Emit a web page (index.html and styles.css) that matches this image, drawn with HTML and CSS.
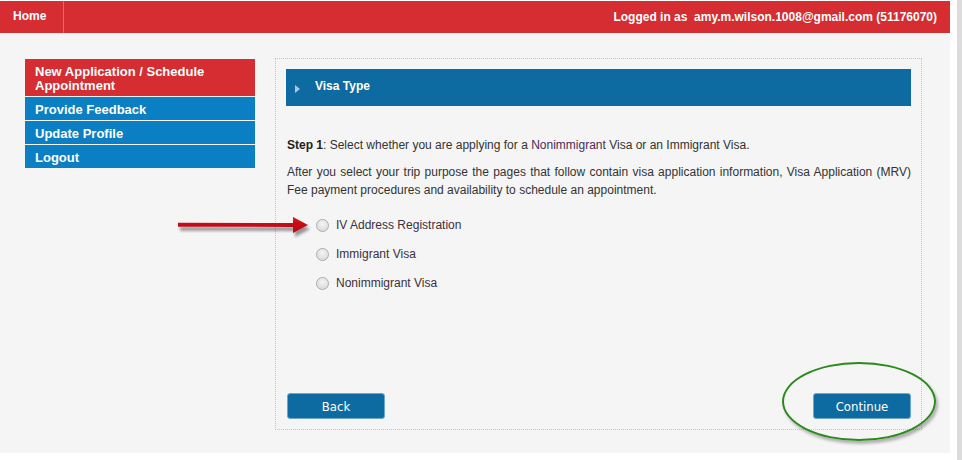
FILE: index.html
```
<!DOCTYPE html>
<html>
<head>
<meta charset="utf-8">
<link rel="stylesheet" href="styles.css">
</head>
<body>
<div class="frame">
  <div class="page">
    <div class="topbar">
      <div class="home">Home</div>
      <div class="login">Logged in as&nbsp; amy.m.wilson.1008@gmail.com (51176070)</div>
    </div>
    <div class="main">
      <ul class="sidebar">
        <li class="nav-item active">New Application / Schedule Appointment</li>
        <li class="nav-item">Provide Feedback</li>
        <li class="nav-item">Update Profile</li>
        <li class="nav-item">Logout</li>
      </ul>
      <div class="panel">
        <div class="panel-head"><span class="tri"></span><span class="head-text">Visa Type</span></div>
        <p class="step"><b>Step 1</b>: Select whether you are applying for a <span class="visited">Nonimmigrant</span> Visa or an Immigrant Visa.</p>
        <p class="info">After you select your trip purpose the pages that follow contain visa application information, Visa Application (MRV) Fee payment procedures and availability to schedule an appointment.</p>
        <div class="options">
          <label class="option"><span class="radio"></span><span class="lbl">IV Address Registration</span></label>
          <label class="option"><span class="radio"></span><span class="lbl">Immigrant Visa</span></label>
          <label class="option"><span class="radio"></span><span class="lbl">Nonimmigrant Visa</span></label>
        </div>
        <div class="actions">
          <button class="btn">Back</button>
          <button class="btn">Continue</button>
        </div>
      </div>
    </div>
    <svg class="arrow" width="150" height="30" viewBox="0 0 150 30">
      <defs>
        <filter id="sh" x="-10%" y="-50%" width="130%" height="250%">
          <feGaussianBlur in="SourceAlpha" stdDeviation="1.8"/>
          <feOffset dx="2" dy="4" result="b"/>
          <feComponentTransfer><feFuncA type="linear" slope="0.4"/></feComponentTransfer>
          <feMerge><feMergeNode/><feMergeNode in="SourceGraphic"/></feMerge>
        </filter>
        <linearGradient id="ag" x1="0" y1="0" x2="0" y2="1">
          <stop offset="0" stop-color="#d4141c"/>
          <stop offset="1" stop-color="#b00c12"/>
        </linearGradient>
      </defs>
      <g filter="url(#sh)">
        <path d="M1 8.7 L116 9 L116 3 L131 11 L116 19 L116 12.9 L1 12.7 Z" fill="url(#ag)"/>
      </g>
    </svg>
    <div class="ring"></div>
  </div>
  <div class="scroll"></div>
</div>
</body>
</html>
```
FILE: styles.css
```
html, body {
  margin: 0;
  padding: 0;
  background: #ffffff;
}
body {
  font-family: "Liberation Sans", Arial, sans-serif;
  font-size: 12px;
  color: #333333;
}
.frame {
  display: flex;
  gap: 7px;
  width: 962px;
  height: 460px;
  overflow: hidden;
}
.page {
  position: relative;
  width: 950px;
  flex: none;
}
.scroll {
  flex: 1;
  background: #dcdcdc;
}
.topbar {
  margin-top: 1px;
  height: 32px;
  background: #d52d31;
  display: flex;
  align-items: center;
  justify-content: space-between;
  color: #ffffff;
  font-weight: bold;
  font-size: 12px;
}
.home {
  width: 50px;
  height: 32px;
  line-height: 31px;
  padding-left: 13px;
  border-right: 1px solid #e4676a;
}
.login {
  padding-right: 13px;
  line-height: 31px;
}
.main {
  background: #f5f5f5;
  height: 420px;
  box-sizing: border-box;
  padding: 25px 0 0 25px;
  display: flex;
  align-items: flex-start;
  gap: 20px;
}
.sidebar {
  list-style: none;
  margin: 1px 0 0 0;
  padding: 0;
  width: 230px;
  display: flex;
  flex-direction: column;
  gap: 1px;
}
.nav-item {
  background: #0a7fc4;
  color: #ffffff;
  font-weight: bold;
  font-size: 13px;
  line-height: 14px;
  padding: 6px 10px 3px 10px;
}
.nav-item.active {
  background: #d52d31;
}
.panel {
  width: 647px;
  height: 372px;
  box-sizing: border-box;
  border: 1px dotted #c4c4c4;
  padding: 10px;
  display: flex;
  flex-direction: column;
}
.panel-head {
  height: 37px;
  box-sizing: border-box;
  padding-bottom: 3px;
  background: #0e6ba1;
  display: flex;
  align-items: center;
  color: #ffffff;
  font-weight: bold;
  font-size: 12px;
}
.tri {
  width: 0;
  height: 0;
  margin-left: 9px;
  margin-top: 5px;
  border-left: 5px solid #a9cbec;
  border-top: 4px solid transparent;
  border-bottom: 4px solid transparent;
}
.head-text {
  margin-left: 15px;
}
.step {
  margin: 30px 0 9px 1px;
  line-height: 18px;
}
.step b {
  color: #222222;
}
.visited {
  color: #4a2a5a;
}
.info {
  margin: 0 0 0 1px;
  line-height: 18px;
  text-align: justify;
}
.options {
  margin-top: 17px;
  padding-left: 30px;
  display: flex;
  flex-direction: column;
  gap: 11px;
}
.option {
  display: flex;
  align-items: center;
  height: 18px;
  gap: 7px;
}
.radio {
  width: 11px;
  height: 11px;
  border-radius: 50%;
  border: 1px solid #a9a9a9;
  background: radial-gradient(circle at 50% 35%, #f4f4f4 0%, #e2e2e2 55%, #cfcfcf 100%);
  box-shadow: inset 0 0 1px #ffffff;
}
.lbl {
  color: #3b3040;
}
.actions {
  margin-top: auto;
  display: flex;
  justify-content: space-between;
  padding-left: 1px;
}
.btn {
  width: 98px;
  height: 26px;
  background: #0e6ba1;
  border: 1px solid #6ea6d2;
  border-radius: 3px;
  color: #ffffff;
  font-family: "DejaVu Sans Condensed", "DejaVu Sans", sans-serif;
  font-stretch: condensed;
  font-size: 13px;
  padding: 0;
}
.arrow {
  position: absolute;
  left: 177px;
  top: 214px;
}
.ring {
  position: absolute;
  left: 782px;
  top: 362px;
  width: 150px;
  height: 75px;
  border: 2px solid #2b8a1c;
  border-radius: 50%;
  box-shadow: 2px 3px 3px rgba(0, 0, 0, 0.28);
}
```
